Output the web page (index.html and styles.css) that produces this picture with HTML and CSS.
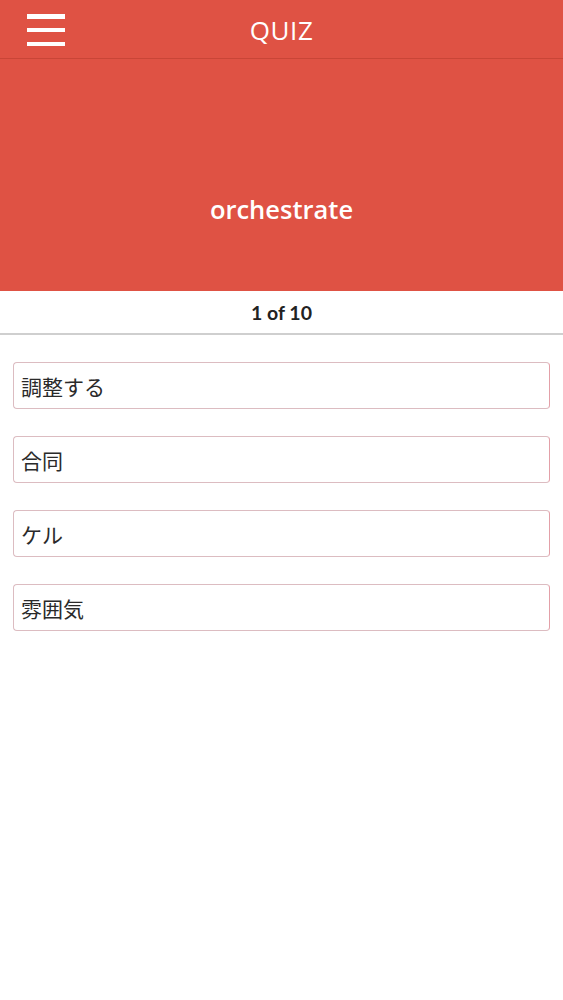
FILE: index.html
```html
<!DOCTYPE html>
<html lang="ja">
<head>
<meta charset="utf-8">
<title>Quiz</title>
<link rel="stylesheet" href="styles.css">
</head>
<body>
<header class="topbar">
  <button class="menu" aria-label="menu">
    <span class="bar"></span><span class="bar"></span><span class="bar"></span>
  </button>
  <h1 class="title">QUIZ</h1>
</header>
<section class="hero">
  <div class="word">orchestrate</div>
</section>
<div class="counter">1 of 10</div>
<ul class="options">
  <li class="option">調整する</li>
  <li class="option">合同</li>
  <li class="option">ケル</li>
  <li class="option">雰囲気</li>
</ul>
</body>
</html>
```
FILE: styles.css
```css
html, body {
  margin: 0;
  padding: 0;
  background: #ffffff;
  font-family: "Noto Sans", "Noto Sans CJK JP", sans-serif;
}
.topbar {
  height: 58px;
  background: #df5244;
  border-bottom: 1px solid #c94537;
  display: flex;
  align-items: center;
  justify-content: center;
  position: relative;
}
.menu {
  position: absolute;
  left: 27px;
  top: 14px;
  width: 38px;
  height: 32px;
  padding: 0;
  border: 0;
  background: none;
  display: flex;
  flex-direction: column;
  justify-content: space-between;
}
.bar {
  display: block;
  height: 4.5px;
  width: 38px;
  background: #ffffff;
}
.title {
  margin: 0;
  color: #ffffff;
  font-family: "Open Sans", sans-serif;
  font-weight: 400;
  font-size: 26px;
  letter-spacing: 0.6px;
  padding-top: 2px;
}
.hero {
  height: 232px;
  background: #df5244;
  display: flex;
  align-items: flex-end;
  justify-content: center;
  box-sizing: border-box;
  padding-bottom: 65px;
}
.word {
  color: #ffffff;
  font-family: "Open Sans", sans-serif;
  font-weight: 600;
  font-size: 25.5px;
  line-height: 34px;
}
.counter {
  height: 42px;
  border-bottom: 2px solid #cfcfcf;
  display: flex;
  align-items: center;
  justify-content: center;
  font-family: "Lato", sans-serif;
  font-weight: 700;
  font-size: 19.5px;
  color: #222222;
}
.options {
  list-style: none;
  margin: 0;
  padding: 27px 13px 0 13px;
  display: flex;
  flex-direction: column;
  gap: 27px;
}
.option {
  height: 45px;
  border: 1px solid #dcbcc1;
  border-right-color: #e3a0a8;
  border-radius: 4px;
  display: flex;
  align-items: center;
  padding-left: 7px;
  font-family: "Noto Sans CJK JP", sans-serif;
  font-size: 21px;
  color: #2a2a2a;
}
```
